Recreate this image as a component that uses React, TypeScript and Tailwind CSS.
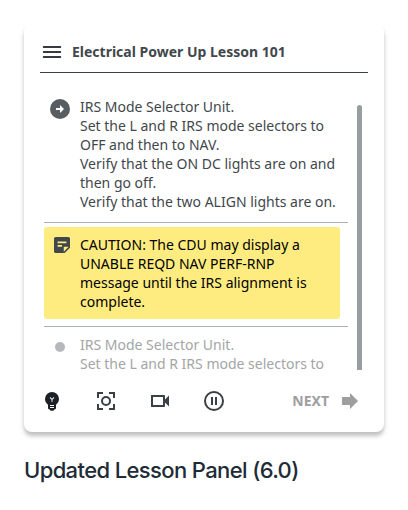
import React from "react";

function LessonHeader() {
  return (
    <header className="mx-4 flex h-[49px] items-center border-b border-[#3b4045] pt-[7px]">
      <svg className="h-6 w-6" viewBox="0 0 24 24" fill="#353b40">
        <path d="M3 18h18v-2H3zm0-5h18v-2H3zm0-7v2h18V6z" />
      </svg>
      <h1 className="ml-2 text-[14px] leading-[19px] font-bold whitespace-nowrap text-[#41474c]">
        Electrical Power Up Lesson 101
      </h1>
    </header>
  );
}

function ArrowBadge() {
  return (
    <svg className="h-5 w-5" viewBox="0 0 20 20">
      <circle cx="10" cy="10" r="10" fill="#575d61" />
      <path d="M6 9h4V6l4 4-4 4v-3H6z" fill="#fff" />
    </svg>
  );
}

function NoteIcon() {
  return (
    <svg className="h-4 w-4" viewBox="3 3 18 18" fill="#41474b">
      <path
        fillRule="evenodd"
        d="M5 3c-1.100 0-2 .9-2 2v14c0 1.100.9 2 2 2h10l6-6V5c0-1.100-.9-2-2-2H5zm2 5h10v2H7V8zm5 6H7v-2h5v2zm2 5.500V14h5.500L14 19.500z"
      />
    </svg>
  );
}

function Controls() {
  return (
    <footer className="mx-4 flex h-6 items-center">
      <svg className="h-6 w-6" viewBox="0 0 24 24">
        <path
          d="M12 3a7 7 0 0 0-7 7c0 2.700 1.300 4.300 3 5.700V19c0 .8.500 1.300 1.500 1.300.3 1 1.200 1.500 2.500 1.500s2.200-.5 2.500-1.500c1 0 1.500-.5 1.500-1.300v-3.300c1.700-1.400 3-3 3-5.700a7 7 0 0 0-7-7z"
          fill="#1b2127"
        />
        <path d="M10 8.500l2 2 2-2M12 10.500V13" fill="none" stroke="#d5d7d9" strokeWidth="1.100" />
        <path d="M10 16.500h4M10 18.500h4" fill="none" stroke="#fff" strokeWidth="1" />
      </svg>
      <svg className="ml-[30px] h-6 w-6" viewBox="0 0 24 24" fill="none" stroke="#394046" strokeWidth="2">
        <path d="M4 9V4h5M15 4h5v5M20 15v5h-5M9 20H4v-5" />
        <circle cx="12" cy="12" r="4" />
      </svg>
      <svg className="ml-[30px] h-6 w-6" viewBox="0 0 24 24" fill="#394046">
        <path
          fillRule="evenodd"
          d="M3 6h13c.6 0 1 .4 1 1v3.500l4-4v11l-4-4V17c0 .6-.4 1-1 1H3V6zm2 2v8h10V8z"
        />
      </svg>
      <svg className="ml-[30px] h-6 w-6" viewBox="0 0 24 24" fill="none" stroke="#394046" strokeWidth="2">
        <circle cx="12" cy="12" r="9" />
        <path d="M10 8v8M14 8v8" />
      </svg>
      <button className="ml-auto flex items-center text-[14px] leading-[19px] font-bold text-[#9e9e9e]">
        <span className="-mt-px">NEXT</span>
        <svg className="mr-[10px] ml-[13px] h-4 w-4" viewBox="0 0 16 16" fill="#9e9e9e">
          <path d="M0 4h8V0l8 8-8 8v-4H0z" />
        </svg>
      </button>
    </footer>
  );
}

export default function App() {
  return (
    <main className="h-[510px] w-[408px] overflow-hidden bg-white px-6 pt-6 font-['Noto_Sans',sans-serif]">
      <section className="h-[408px] w-[360px] rounded-[8px] bg-white shadow-[0_4px_4px_rgba(0,0,0,0.25)]">
        <LessonHeader />
        <div className="flex h-[297px] pt-6 pl-5 text-[14px] leading-[19px]">
          <div className="h-[273px] w-[304px] shrink-0">
            <div className="flex h-[126px] border-b border-[#abb0b8]">
              <div className="ml-[6px] w-[30px] pt-[2px]">
                <ArrowBadge />
              </div>
              <p className="whitespace-nowrap text-[#41474c]">
                IRS Mode Selector Unit.
                <br />
                Set the L and R IRS mode selectors to
                <br />
                OFF and then to NAV.
                <br />
                Verify that the ON DC lights are on and
                <br />
                then go off.
                <br />
                Verify that the two ALIGN lights are on.
              </p>
            </div>
            <div className="mt-1 flex h-[92px] w-[296px] rounded-[3px] bg-[#ffec80] pt-2">
              <div className="ml-[10px] w-[26px] pt-[2px]">
                <NoteIcon />
              </div>
              <p className="whitespace-nowrap text-black">
                CAUTION: The CDU may display a
                <br />
                UNABLE REQD NAV PERF-RNP
                <br />
                message until the IRS alignment is
                <br />
                complete.
              </p>
            </div>
            <div className="mt-[7px] flex border-t border-[#abb0b8] pt-2">
              <div className="ml-[11px] w-[25px] pt-[7px]">
                <div className="h-[10px] w-[10px] rounded-full bg-[#b5b9bb]" />
              </div>
              <p className="whitespace-nowrap text-[#a3a5a7]">
                IRS Mode Selector Unit.
                <br />
                Set the L and R IRS mode selectors to
              </p>
            </div>
          </div>
          <div className="mt-2 ml-[9px] h-[265px] w-[5px] rounded-t-[3px] bg-[#979da1]" />
        </div>
        <div className="pt-[19px]">
          <Controls />
        </div>
      </section>
      <h2 className="mt-6 font-['Inter',sans-serif] text-[22px] leading-[28px] font-medium tracking-[-0.62px] whitespace-nowrap text-[#202b36]">
        Updated Lesson Panel (6.0)
      </h2>
    </main>
  );
}
